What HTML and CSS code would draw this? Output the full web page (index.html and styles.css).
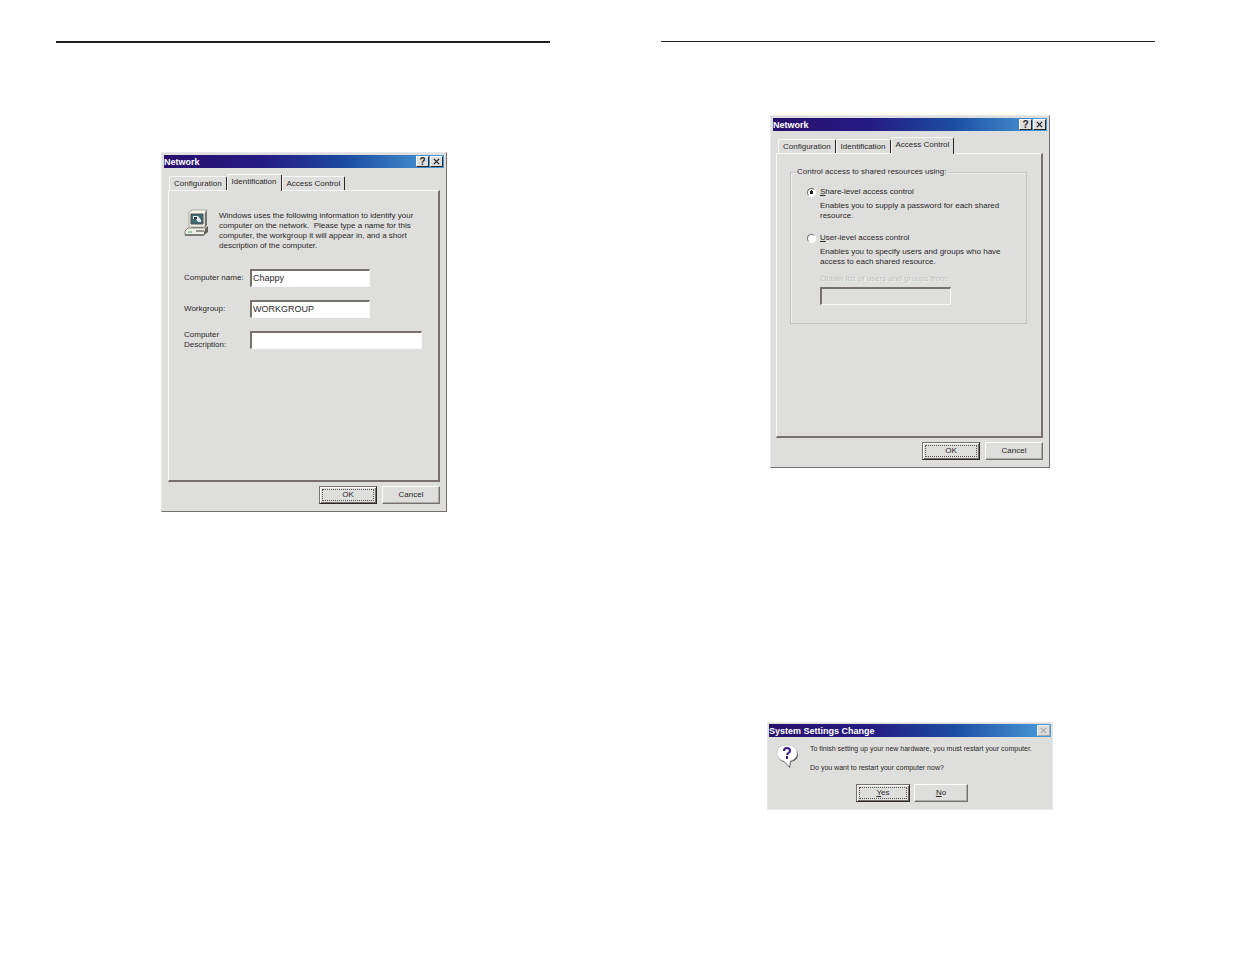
FILE: index.html
```html
<!DOCTYPE html>
<html lang="en">
<head>
  <meta charset="UTF-8">
  <meta name="viewport" content="width=device-width, initial-scale=1.0">
  <title>Network Setup</title>
  <link rel="stylesheet" href="styles.css">
</head>
<body>
  <main class="spread">
    <!-- LEFT PAGE -->
    <section class="page page-left">
      <hr>
      <div class="dialog network">
        <header class="title-bar">
          <h2>Network</h2>
          <button type="button" class="title-btn" aria-label="Help">?</button>
          <button type="button" class="title-btn" aria-label="Close">
            <svg viewBox="0 0 8 8"><path d="M1 1l6 6M7 1l-6 6"/></svg>
          </button>
        </header>
        <div class="tabs" role="tablist">
          <button type="button" role="tab">Configuration</button>
          <button type="button" role="tab" class="active" aria-selected="true">Identification</button>
          <button type="button" role="tab">Access Control</button>
        </div>
        <div class="panel identification">
          <div class="intro">
            <svg class="pc-icon" viewBox="0 0 26 28">
              <path d="M5 3l3-2h15l-2 3v14H5z" fill="#f4f4ee" stroke="#aaa9a2"/>
              <path d="M21 4l2-3v15l-2 3z" fill="#77756f"/>
              <path d="M7 5h12v10H7z" fill="#416b72" stroke="#4c4c4c"/>
              <path d="M9 7h5l3 4v2h-3l-2-3H9z" fill="#e6eeee"/>
              <path d="M10 8h3v2h-3z" fill="#252f40"/>
              <path d="M8 18h11v2H8z" fill="#88867e"/>
              <path d="M4 19h18v5l-2 2H1v-4z" fill="#efefe8" stroke="#8b8981"/>
              <path d="M22 19l2-2v6l-4 3v-3z" fill="#625f5a"/>
              <path d="M4 23h4" stroke="#54a56c"/>
              <path d="M12 22h8M1 26h19" stroke="#45423e"/>
            </svg>
            <p>Windows uses the following information to identify your computer on the network.&nbsp; Please type a name for this computer, the workgroup it will appear in, and a short description of the computer.</p>
          </div>
          <div class="field">
            <label for="computerName">Computer name:</label>
            <input type="text" id="computerName" value="Chappy">
          </div>
          <div class="field">
            <label for="workgroup">Workgroup:</label>
            <input type="text" id="workgroup" value="WORKGROUP">
          </div>
          <div class="field wide">
            <label for="description">Computer<br>Description:</label>
            <input type="text" id="description">
          </div>
        </div>
        <footer class="actions">
          <button type="button" class="btn default">OK</button>
          <button type="button" class="btn">Cancel</button>
        </footer>
      </div>
    </section>

    <!-- RIGHT PAGE -->
    <section class="page page-right">
      <hr>
      <div class="dialog network">
        <header class="title-bar">
          <h2>Network</h2>
          <button type="button" class="title-btn" aria-label="Help">?</button>
          <button type="button" class="title-btn" aria-label="Close">
            <svg viewBox="0 0 8 8"><path d="M1 1l6 6M7 1l-6 6"/></svg>
          </button>
        </header>
        <div class="tabs" role="tablist">
          <button type="button" role="tab">Configuration</button>
          <button type="button" role="tab">Identification</button>
          <button type="button" role="tab" class="active" aria-selected="true">Access Control</button>
        </div>
        <div class="panel access">
          <fieldset>
            <legend>Control access to shared resources using:</legend>
            <div class="option">
              <input type="radio" name="access" id="shareLevel" checked>
              <label for="shareLevel"><u>S</u>hare-level access control</label>
              <p>Enables you to supply a password for each shared resource.</p>
            </div>
            <div class="option">
              <input type="radio" name="access" id="userLevel">
              <label for="userLevel"><u>U</u>ser-level access control</label>
              <p>Enables you to specify users and groups who have access to each shared resource.</p>
            </div>
            <div class="source">
              <label for="userList">Obtain list of users and groups from:</label>
              <input type="text" id="userList" disabled>
            </div>
          </fieldset>
        </div>
        <footer class="actions">
          <button type="button" class="btn default">OK</button>
          <button type="button" class="btn">Cancel</button>
        </footer>
      </div>

      <div class="dialog message">
        <header class="title-bar">
          <h2>System Settings Change</h2>
          <button type="button" class="title-btn" aria-label="Close" disabled>
            <svg viewBox="0 0 8 8"><path d="M1 1l6 6M7 1l-6 6"/></svg>
          </button>
        </header>
        <div class="message-body">
          <svg class="question-icon" viewBox="0 0 24 26">
            <path d="M13 3c5 0 9 3 9 7 0 5-3 7-7 8l-1 6-6-6c-4-1-6-4-6-7 0-5 5-8 11-8z" fill="#55555a"/>
            <path d="M11 1c6 0 10 3 10 8 0 4-3 7-7 8l-1 5-5-5c-4-1-7-4-7-8 0-5 4-8 10-8z" fill="#fff" stroke="#ccc"/>
            <path d="M8 7c0-4 6-4 6 0 0 2-3 2-3 4" fill="none" stroke="#3a1686" stroke-width="2"/>
            <path d="M10 12h2v3h-2z" fill="#3a1686"/>
          </svg>
          <div class="message-text">
            <p>To finish setting up your new hardware, you must restart your computer.</p>
            <p>Do you want to restart your computer now?</p>
          </div>
        </div>
        <footer class="actions">
          <button type="button" class="btn default"><u>Y</u>es</button>
          <button type="button" class="btn"><u>N</u>o</button>
        </footer>
      </div>
    </section>
  </main>
</body>
</html>
```
FILE: styles.css
```css
:root {
  --face: #dededc;
  --light: #f8f8f8;
  --shadow: #77706e;
  --dark: #2b2728;
  --text: #2b2829;
}

*, *::before, *::after {
  box-sizing: border-box;
  margin: 0;
  padding: 0;
}

body {
  background: #fff;
  color: var(--text);
  font-family: "Liberation Sans", sans-serif;
  font-size: 8px;
  line-height: 10px;
}

button, input {
  font: inherit;
  color: inherit;
}

/* PAGES */
.spread {
  display: grid;
  grid-template-columns: 1fr 1fr;
  gap: 111px;
  padding: 41px 80px 40px 56px;
}

.page {
  display: flex;
  flex-direction: column;
  align-items: center;
}

.page hr {
  width: 100%;
  border: none;
  border-top: 2px solid #231f20;
}

.page-right hr {
  border-top-width: 1px;
}

/* DIALOGS */
.dialog {
  width: 286px;
  padding: 2px;
  background: var(--face);
  border: 1px solid;
  border-color: #e8e8e8 var(--shadow) var(--shadow) #e8e8e8;
}

.page-left .dialog {
  margin-left: 2px;
}

.page-right .dialog {
  margin-left: 4px;
}

.page-left .network {
  margin-top: 109px;
}

.page-right .network {
  width: 280px;
  margin-top: 73px;
}

.title-bar {
  display: flex;
  align-items: center;
  height: 13px;
  padding-right: 1px;
  background: linear-gradient(to right, #28106c, #251a83 35%, #1c4ca0 65%, #4b9dda);
}

.title-bar h2 {
  flex: 1;
  color: #fff;
  font-size: 9px;
  line-height: 12px;
}

.title-btn {
  display: flex;
  align-items: center;
  justify-content: center;
  width: 13px;
  height: 11px;
  background: var(--face);
  border: 1px solid;
  border-color: #fff var(--dark) var(--dark) #fff;
  font-size: 10px;
  font-weight: bold;
  line-height: 9px;
}

.title-btn + .title-btn {
  margin-left: 1px;
}

.title-btn svg {
  width: 7px;
  height: 7px;
  stroke: #222;
  stroke-width: 1.5;
}

.title-btn:disabled {
  border-color: #eee #aaa #aaa #eee;
}

.title-btn:disabled svg {
  stroke: #aaa;
}

/* TABS */
.tabs {
  display: flex;
  align-items: flex-end;
  height: 22px;
  padding: 0 5px;
}

.tabs button {
  height: 14px;
  padding: 0 4px;
  background: none;
  border: 1px solid;
  border-color: var(--light) var(--dark) transparent var(--light);
  border-bottom: none;
  border-radius: 2px 2px 0 0;
  white-space: nowrap;
}

.tabs .active {
  height: 17px;
  padding: 0 4px 3px;
  margin-bottom: -1px;
  background: var(--face);
  z-index: 1;
}

.panel {
  margin: 0 4px;
  border: 1px solid;
  border-color: var(--light) var(--shadow) var(--shadow) var(--light);
  border-right-width: 2px;
  border-bottom-width: 2px;
}

/* IDENTIFICATION */
.identification {
  min-height: 292px;
  padding: 18px 12px 0 15px;
}

.intro {
  display: flex;
  gap: 9px;
  margin-bottom: 18px;
}

.pc-icon {
  flex: none;
  width: 26px;
  height: 28px;
}

.intro p {
  padding-top: 2px;
}

.field {
  display: flex;
  align-items: center;
  height: 18px;
  margin-bottom: 13px;
}

.field label {
  width: 66px;
}

.field input, .source input {
  width: 120px;
  height: 18px;
  padding: 0 1px 2px;
  background: #fff;
  border: 1px solid;
  border-width: 2px 1px 1px 2px;
  border-color: var(--shadow) var(--light) var(--light) var(--shadow);
  font-size: 9px;
}

.field.wide input {
  width: 172px;
}

/* ACCESS CONTROL */
.access {
  min-height: 285px;
  margin-left: 3px;
  padding: 13px 14px 0 13px;
}

fieldset {
  height: 157px;
  padding: 10px 14px 0 16px;
  border: 1px solid #c3c3c3;
  box-shadow: inset 1px 1px #eee;
}

legend {
  margin-left: -11px;
  padding: 0 1px;
}

.option {
  display: grid;
  grid-template-columns: 13px 1fr;
  align-items: center;
  row-gap: 4px;
  margin-bottom: 12px;
}

.option p {
  grid-column: 2;
}

.option input {
  appearance: none;
  width: 9px;
  height: 9px;
  background: #fff;
  border: 1px solid;
  border-color: var(--shadow) #fff #fff var(--shadow);
  border-radius: 50%;
}

.option input:checked {
  background: radial-gradient(circle, #222 0 2px, #fff 2px);
}

.source {
  display: flex;
  flex-direction: column;
  gap: 3px;
  margin-top: -5px;
  padding-left: 13px;
  color: #bfbfbf;
  text-shadow: 1px 1px #f2f2f2;
}

.source input {
  width: 131px;
  background: var(--face);
}

/* BUTTONS */
.actions {
  display: flex;
  justify-content: flex-end;
  gap: 5px;
  padding: 4px 4px 5px;
}

.btn {
  width: 58px;
  height: 18px;
  background: var(--face);
  border: 1px solid;
  border-color: #fff var(--shadow) var(--shadow) #fff;
  box-shadow: inset -1px -1px #aaa;
}

.btn.default {
  border-color: var(--shadow) var(--dark) var(--dark) var(--shadow);
  box-shadow: inset 1px 1px #fff, inset -1px -1px var(--shadow);
  outline: 1px dotted #555;
  outline-offset: -4px;
}

/* MESSAGE BOX */
.message {
  margin-top: 254px;
  padding: 1px;
  border-color: #e8e8e8;
}

.message-body {
  display: flex;
  gap: 10px;
  padding: 7px 0 0 7px;
}

.question-icon {
  flex: none;
  width: 24px;
  height: 26px;
}

.message-text {
  display: flex;
  flex-direction: column;
  gap: 9px;
  font-size: 7px;
  white-space: nowrap;
}

.message .actions {
  justify-content: center;
  gap: 4px;
  padding: 11px 0 6px 4px;
}

.message .btn {
  width: 54px;
}
```
